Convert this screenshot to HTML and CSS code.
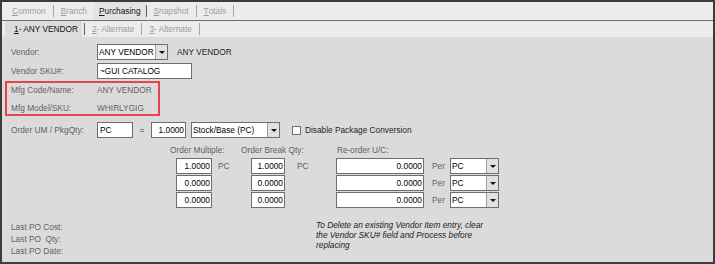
FILE: index.html
```html
<!DOCTYPE html>
<html lang="en">

<head>
    <meta charset="utf-8">
    <title>Purchasing</title>
    <link rel="stylesheet" href="styles.css">
</head>

<body>
<div class="frame">
    <div class="tabs tabs-main">
        <span class="tab"><u>C</u>ommon</span><i class="sep"></i>
        <span class="tab"><u>B</u>ranch</span>
        <span class="tab tab-on"><u>P</u>urchasing</span><i class="sep sep-dark"></i>
        <span class="tab"><u>S</u>napshot</span><i class="sep"></i>
        <span class="tab"><u>T</u>otals</span><i class="sep"></i>
    </div>
    <div class="tabs tabs-sub">
        <span class="tab tab-on"><u>1</u> - ANY VENDOR</span><i class="sep sep-dark"></i>
        <span class="tab"><u>2</u> - Alternate</span><i class="sep"></i>
        <span class="tab"><u>3</u> - Alternate</span><i class="sep"></i>
    </div>

    <div class="panel-body">
        <div class="field-row">
            <span class="field-label">Vendor:</span>
            <div class="combo combo-vendor"><span class="combo-text">ANY VENDOR</span><span class="combo-btn"><b></b></span></div>
            <span class="vendor-name">ANY VENDOR</span>
        </div>
        <div class="field-row row-sku">
            <span class="field-label">Vendor SKU#:</span>
            <span class="input input-sku">~GUI CATALOG</span>
        </div>

        <div class="mfg-box">
            <div class="mfg-row"><span class="field-label">Mfg Code/Name:</span><span class="mfg-value">ANY VENDOR</span></div>
            <div class="mfg-row"><span class="field-label">Mfg Model/SKU:</span><span class="mfg-value">WHIRLYGIG</span></div>
        </div>

        <div class="field-row row-um">
            <span class="field-label">Order UM / PkgQty:</span>
            <span class="input input-um">PC</span>
            <span class="equals">=</span>
            <span class="input num input-pkg">1.0000</span>
            <div class="combo combo-stock"><span class="combo-text">Stock/Base (PC)</span><span class="combo-btn"><b></b></span></div>
            <span class="checkbox"></span>
            <span class="check-label">Disable Package Conversion</span>
        </div>

        <div class="matrix">
            <div class="matrix-head">
                <span class="head-multiple">Order Multiple:</span>
                <span class="head-break">Order Break Qty:</span>
                <span>Re-order U/C:</span>
            </div>
            <div class="matrix-row">
                <span class="input num in-mult">1.0000</span><span class="unit unit-mult">PC</span>
                <span class="input num in-break">1.0000</span><span class="unit unit-break">PC</span>
                <span class="input num in-cost">0.0000</span><span class="unit unit-per">Per</span>
                <div class="combo combo-uc"><span class="combo-text">PC</span><span class="combo-btn"><b></b></span></div>
            </div>
            <div class="matrix-row">
                <span class="input num in-mult">0.0000</span><span class="unit unit-mult"></span>
                <span class="input num in-break">0.0000</span><span class="unit unit-break"></span>
                <span class="input num in-cost">0.0000</span><span class="unit unit-per">Per</span>
                <div class="combo combo-uc"><span class="combo-text">PC</span><span class="combo-btn"><b></b></span></div>
            </div>
            <div class="matrix-row">
                <span class="input num in-mult">0.0000</span><span class="unit unit-mult"></span>
                <span class="input num in-break">0.0000</span><span class="unit unit-break"></span>
                <span class="input num in-cost">0.0000</span><span class="unit unit-per">Per</span>
                <div class="combo combo-uc"><span class="combo-text">PC</span><span class="combo-btn"><b></b></span></div>
            </div>
        </div>

        <div class="footer">
            <div class="last-po">
                <div>Last PO Cost:</div>
                <div>Last PO&nbsp; Qty:</div>
                <div>Last PO Date:</div>
            </div>
            <div class="note">To Delete an existing Vendor Item entry, clear<br>the Vendor SKU# field and Process before<br>replacing</div>
        </div>
    </div>
</div>
</body>
</html>
```

FILE: styles.css
```css
* {
    margin: 0px;
    padding: 0px;
    box-sizing: border-box;
}

body {
    font-family: "Liberation Sans", Arial, sans-serif;
    font-size: 8.3px;
    color: #626262;
    background: #fff;
}

u {
    text-decoration: underline;
}

.frame {
    width: 715px;
    height: 264px;
    border: 2px solid #3c3c3c;
    display: flex;
    flex-direction: column;
    background: #dbdbdb;
}

/* tab strips */
.tabs {
    display: flex;
    align-items: center;
    background: #ececec;
    padding-left: 3px;
}

.tabs-main {
    height: 19px;
    border-bottom: 1px solid #6e6e6e;
}

.tabs-sub {
    height: 16px;
}

.tab {
    display: flex;
    align-items: center;
    height: 100%;
    padding: 0 7px;
    color: #9c9c9c;
}

.tabs-main .tab-on {
    color: #111;
    background: #e3e3e3;
    padding: 0 5px;
}

.tabs-sub .tab-on {
    color: #111;
    background: #dcdcdc;
    padding: 0 4px 0 9px;
    margin-right: 2px;
}

.sep {
    display: block;
    width: 1px;
    height: 12px;
    background: #a8a8a8;
}

.sep-dark {
    background: #606060;
}

/* form */
.panel-body {
    flex: 1;
    padding: 7px 0 0 9px;
}

.field-row {
    display: flex;
    align-items: center;
    height: 16px;
}

.field-label {
    width: 86px;
    flex-shrink: 0;
}

.row-sku {
    margin-top: 3px;
}

.input {
    display: flex;
    align-items: center;
    height: 16px;
    padding: 0 2px;
    background: #fff;
    border: 1px solid #6e6e6e;
    color: #000;
    white-space: nowrap;
}

.input.num {
    justify-content: flex-end;
    padding-right: 1px;
}

.input-sku {
    width: 95px;
}

.combo {
    display: flex;
    height: 16px;
    background: #fff;
    border: 1px solid #6e6e6e;
    color: #000;
}

.combo-text {
    flex: 1;
    display: flex;
    align-items: center;
    padding-left: 1px;
    white-space: nowrap;
    overflow: hidden;
}

.combo-btn {
    width: 12px;
    display: flex;
    align-items: center;
    justify-content: center;
    background: #e1e1e1;
    border-left: 1px solid #a0a0a0;
}

.combo-btn b {
    width: 0;
    height: 0;
    border-left: 3px solid transparent;
    border-right: 3px solid transparent;
    border-top: 3px solid #111;
}

.combo-vendor {
    width: 71px;
}

.vendor-name {
    margin-left: 9px;
    color: #1e1e1e;
}

.mfg-box {
    width: 155px;
    margin: 2px 0 0 -6px;
    padding-left: 4px;
    border: 2px solid #e4464c;
    display: flex;
    flex-direction: column;
    gap: 5px;
}

.mfg-row {
    display: flex;
    align-items: center;
    height: 13px;
}

.row-um {
    margin-top: 6px;
}

.input-um {
    width: 36px;
}

.equals {
    width: 18px;
    text-align: center;
    color: #333;
}

.input-pkg {
    width: 35px;
}

.combo-stock {
    width: 89px;
    margin-left: 5px;
}

.checkbox {
    width: 9px;
    height: 9px;
    margin-left: 12px;
    background: #fff;
    border: 1px solid #707070;
}

.check-label {
    margin-left: 4px;
    color: #1e1e1e;
}

/* order grid */
.matrix {
    margin: 6px 0 0 159px;
    display: flex;
    flex-direction: column;
    gap: 1px;
}

.matrix-head {
    display: flex;
    align-items: center;
    height: 12px;
    margin-bottom: 1px;
}

.head-multiple {
    width: 71px;
}

.head-break {
    width: 96px;
}

.matrix-row {
    display: flex;
    align-items: center;
    height: 16px;
    padding-left: 6px;
}

.in-mult {
    width: 36px;
}

.in-break {
    width: 34px;
}

.in-cost {
    width: 88px;
}

.unit {
    flex-shrink: 0;
}

.unit-mult {
    width: 39px;
    padding-left: 6px;
}

.unit-break {
    width: 51px;
    padding-left: 12px;
}

.unit-per {
    width: 26px;
    padding-left: 8px;
}

.combo-uc {
    width: 49px;
}

/* footer */
.footer {
    display: flex;
    margin-top: 13px;
}

.last-po {
    width: 305px;
    line-height: 12px;
}

.note {
    font-style: italic;
    color: #222;
    line-height: 10px;
    margin-top: -1px;
}
```
